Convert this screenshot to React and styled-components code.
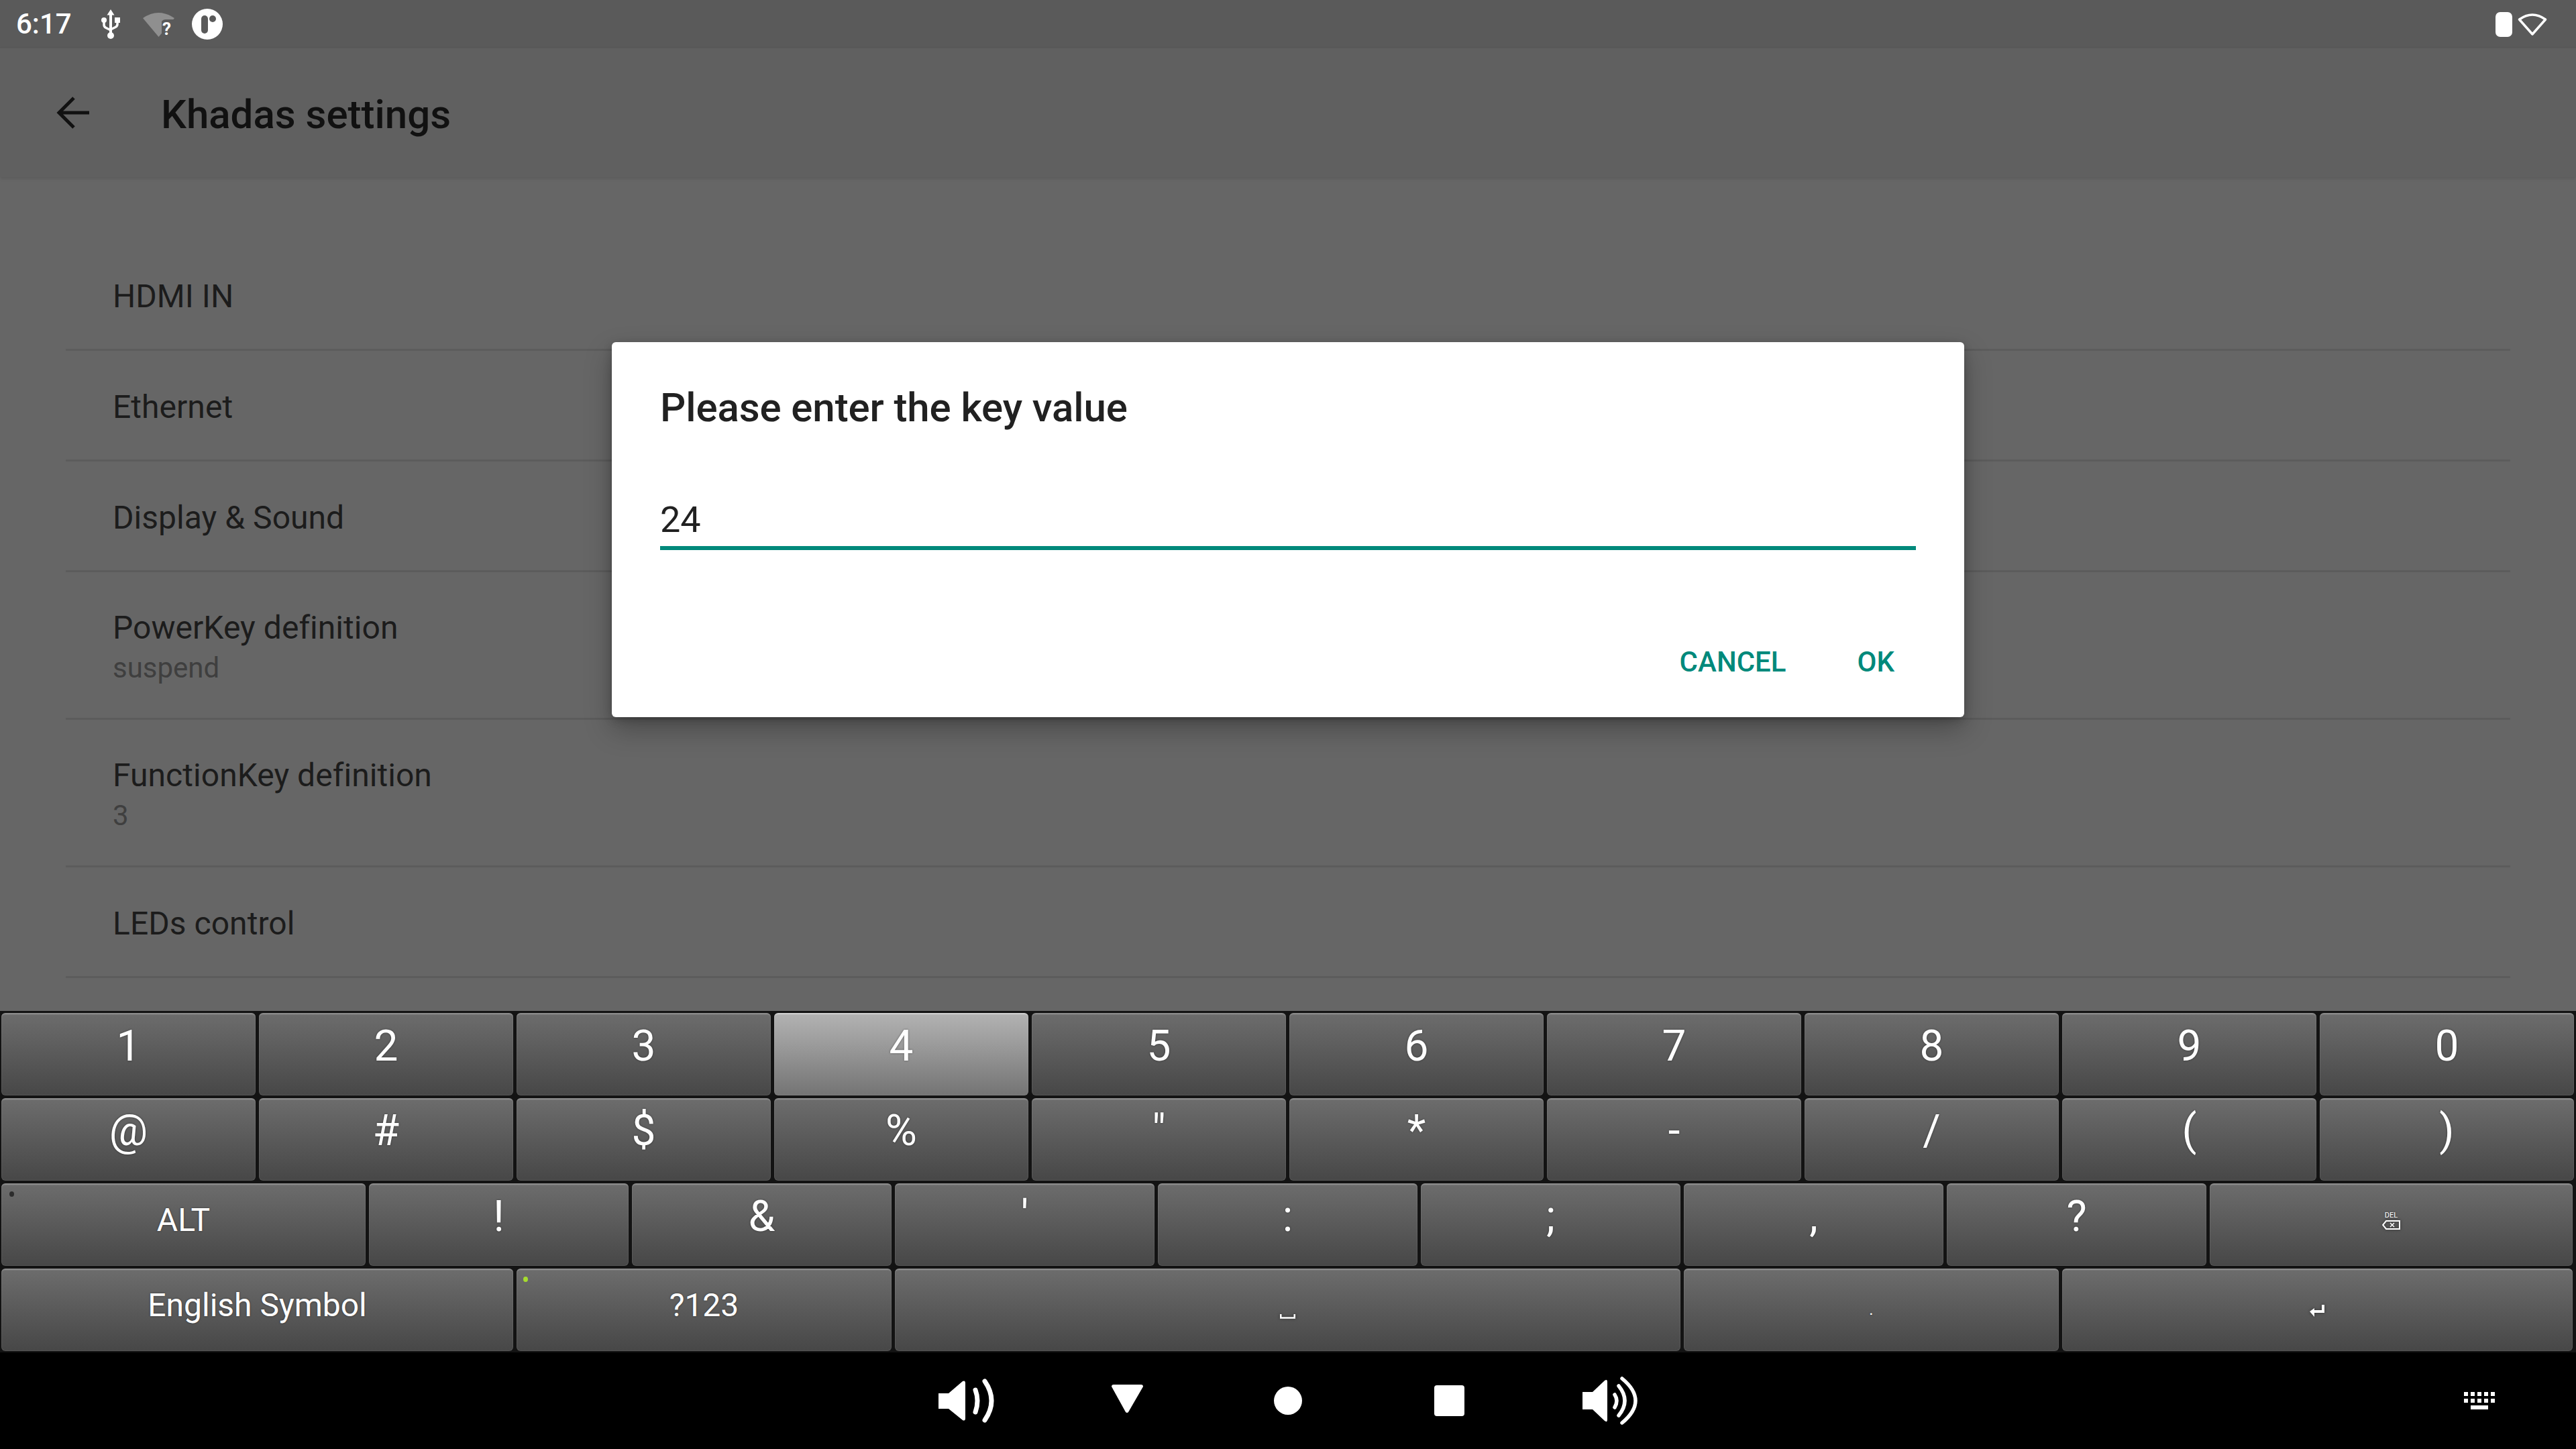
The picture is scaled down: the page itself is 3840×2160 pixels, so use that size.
import styled, { createGlobalStyle } from "styled-components";

const Global = createGlobalStyle`
  html, body {
    margin: 0;
    padding: 0;
    background: #666;
  }
  * {
    box-sizing: border-box;
  }
`;

const Page = styled.div`
  position: relative;
  display: flex;
  flex-direction: column;
  width: 100%;
  height: 100vh;
  overflow: hidden;
  background: #666;
  font-family: Roboto, "Noto Sans", sans-serif;
`;

const StatusBar = styled.div`
  display: flex;
  align-items: center;
  justify-content: space-between;
  flex: 0 0 72px;
  padding: 0 43px 0 24px;
  background: #5a5a5a;
  color: #fff;
`;

const StatusGroup = styled.div`
  display: flex;
  align-items: center;
  gap: ${(p) => p.$gap || 0}px;
`;

const Time = styled.span`
  font-size: 42px;
  font-weight: 500;
  line-height: 72px;
  margin-right: 22px;
`;

const IconSlot = styled.span`
  display: flex;
  align-items: center;
  justify-content: center;
  width: 72px;
`;

const ActionBar = styled.div`
  position: relative;
  z-index: 1;
  display: flex;
  align-items: center;
  flex: 0 0 192px;
  padding-left: 84px;
  background: #606060;
  box-shadow: 0 2px 5px rgba(0, 0, 0, 0.12);
`;

const BarTitle = styled.h1`
  margin: 4px 0 0 107px;
  font-size: 60px;
  font-weight: 500;
  color: #111;
`;

const List = styled.div`
  flex: 1;
  padding: 94px 98px 0;
`;

const Row = styled.div`
  display: flex;
  flex-direction: column;
  justify-content: center;
  height: ${(p) => (p.$tall ? 220 : 165)}px;
  padding: 5px 0 0 70px;
  border-bottom: 3px solid #5c5c5c;
`;

const RowTitle = styled.div`
  font-size: 48px;
  line-height: 64px;
  letter-spacing: 0.04px;
  color: #1c1c1c;
`;

const RowValue = styled.div`
  font-size: 42px;
  line-height: 56px;
  color: #3f3f3f;
`;

const Dialog = styled.div`
  position: absolute;
  top: 510px;
  left: 912px;
  display: flex;
  flex-direction: column;
  width: 2016px;
  height: 559px;
  padding: 62px 72px 0;
  background: #fff;
  border-radius: 6px;
  box-shadow: 0 18px 40px rgba(0, 0, 0, 0.28), 0 4px 14px rgba(0, 0, 0, 0.2);
`;

const DialogTitle = styled.div`
  font-size: 60px;
  font-weight: 500;
  line-height: 72px;
  letter-spacing: -0.1px;
  color: #212121;
`;

const Field = styled.div`
  margin-top: 96px;
  height: 80px;
  font-size: 54px;
  line-height: 70px;
  color: #212121;
  border-bottom: 6px solid #00897b;
`;

const Actions = styled.div`
  display: flex;
  justify-content: flex-end;
  gap: 106px;
  margin-top: 142px;
  padding-right: 32px;
`;

const ActionButton = styled.span`
  font-size: 42px;
  font-weight: 500;
  line-height: 50px;
  color: #00897b;
`;

const Keyboard = styled.div`
  display: flex;
  flex-direction: column;
  gap: 4px;
  flex: 0 0 509px;
  padding: 3px 0 2px 2px;
  background: #131313;
`;

const KeyRow = styled.div`
  display: flex;
  gap: 5px;
  height: 123px;
`;

const Key = styled.div`
  position: relative;
  display: flex;
  align-items: center;
  justify-content: center;
  flex: 0 0 ${(p) => p.$w - 5}px;
  padding-top: ${(p) => p.$drop || 0}px;
  padding-bottom: ${(p) => p.$lift || 0}px;
  font-size: ${(p) => p.$size || 64}px;
  font-weight: 400;
  color: #fff;
  text-shadow: 0 0 3px rgba(0, 0, 0, 0.45);
  border-radius: 6px;
  border-top: 2px solid ${(p) => (p.$active ? "#cfcfcf" : "#8c8c8c")};
  box-shadow: inset 0 0 0 1px rgba(255, 255, 255, 0.08);
  background: ${(p) =>
    p.$active
      ? "linear-gradient(#b2b2b2, #747474)"
      : "linear-gradient(#6c6c6c, #474747)"};

  svg {
    filter: drop-shadow(0 0 2px rgba(0, 0, 0, 0.5));
  }
`;

const Led = styled.i`
  position: absolute;
  top: ${(p) => p.$top}px;
  left: ${(p) => p.$left}px;
  width: 7px;
  height: 8px;
  border-radius: 50%;
  background: ${(p) => (p.$on ? "#a6dc2e" : "#2c2c2c")};
`;

const DelLabel = styled.span`
  display: flex;
  flex-direction: column;
  align-items: center;
  gap: 1px;
  font-size: 11px;
  line-height: 12px;
  font-weight: 400;
`;

const NavBar = styled.div`
  display: grid;
  grid-template-columns: 1fr auto 1fr;
  align-items: center;
  flex: 0 0 144px;
  background: #000;
`;

const NavCenter = styled.div`
  grid-column: 2;
  display: flex;
`;

const NavSlot = styled.span`
  display: flex;
  align-items: center;
  justify-content: center;
  width: 240px;
`;

const NavRight = styled.div`
  display: flex;
  justify-content: flex-end;
  padding-right: 121px;
`;

const UsbIcon = () => (
  <svg width="28" height="44" viewBox="0 0 28 44">
    <path d="M14 0l5.500 8.500H16V36h-4V8.500H8.500z" fill="#fff" />
    <circle cx="14" cy="39" r="5" fill="#fff" />
    <circle cx="4" cy="16" r="4" fill="#fff" />
    <rect x="20" y="12" width="8" height="8" fill="#fff" />
    <path d="M4 18v5q0 3 3 4.500l7 3.500M24 18v4q0 3-3 4.500L14 30" fill="none" stroke="#fff" strokeWidth="3.500" />
  </svg>
);

const WifiUnknownIcon = () => (
  <svg width="47" height="44" viewBox="0 0 47 44">
    <path d="M0 13Q23-3 47 13L23.500 41z" fill="#8f8f8f" />
    <path d="M28 18q2-3 6-3h13v26H28z" fill="#5a5a5a" />
    <text x="29" y="38" fontFamily="Roboto, sans-serif" fontWeight="700" fontSize="26" fill="#fff">?</text>
  </svg>
);

const LogoIcon = () => (
  <svg width="46" height="46" viewBox="0 0 46 46">
    <circle cx="23" cy="23" r="23" fill="#fff" />
    <rect x="14" y="10" width="10" height="27" rx="5" fill="#5a5a5a" />
    <circle cx="31" cy="15" r="5" fill="#5a5a5a" />
  </svg>
);

const BatteryIcon = () => (
  <svg width="25" height="37" viewBox="0 0 25 37">
    <rect width="25" height="37" rx="7" fill="#fff" />
  </svg>
);

const WifiIcon = () => (
  <svg width="44" height="36" viewBox="0 0 44 36">
    <path d="M2.500 11Q22-3 41.500 11L22 33z" fill="none" stroke="#fff" strokeWidth="3.500" strokeLinejoin="round" />
  </svg>
);

const BackIcon = () => (
  <svg width="49" height="48" viewBox="0 0 49 48">
    <path d="M49 24H4M26 2L4 24l22 22" fill="none" stroke="#111" strokeWidth="5" />
  </svg>
);

const DelIcon = () => (
  <svg width="27" height="14" viewBox="0 0 27 14">
    <path d="M26 1H6L1 7l5 6h20z" fill="none" stroke="#fff" strokeWidth="2" />
    <path d="M12 4l6 6M18 4l-6 6" stroke="#fff" strokeWidth="1.500" />
  </svg>
);

const EnterIcon = () => (
  <svg width="23" height="18" viewBox="0 0 23 18">
    <path d="M20 0v10H7" fill="none" stroke="#fff" strokeWidth="4" />
    <path d="M0 10l7-5v13z" fill="#fff" />
  </svg>
);

const SpaceIcon = () => (
  <svg width="23" height="7" viewBox="0 0 23 7">
    <path d="M1.250 0v5.500h20.500V0" fill="none" stroke="#fff" strokeWidth="2.500" />
  </svg>
);

const VolumeDownIcon = () => (
  <svg width="84" height="66" viewBox="0 0 84 66">
    <path d="M1 22h15L37 4q4-2 4 3v52q0 5-4 3L16 45H1z" fill="#fff" />
    <g fill="none" stroke="#fff" strokeWidth="7" strokeLinecap="round">
      <path d="M56 17q6 16 0 33" />
      <path d="M70 4q20 29 0 58" />
    </g>
  </svg>
);

const VolumeUpIcon = () => (
  <svg width="84" height="72" viewBox="0 0 84 72">
    <path d="M1 23h15L34 6q4-3 4 2v56q0 5-4 2L16 49H1z" fill="#fff" />
    <g fill="none" stroke="#fff" strokeWidth="5.500" strokeLinecap="round">
      <path d="M49 27q6 9 0 19" />
      <path d="M55 14q18 22 0 44" />
      <path d="M60 3q40 33 0 66" />
    </g>
  </svg>
);

const BackTriangle = () => (
  <svg width="47" height="48" viewBox="0 0 47 48">
    <path d="M3 0h41q3 0 3 3L25 41q-2 2-4 0L0 3q0-3 3-3z" fill="#fff" />
  </svg>
);

const HomeCircle = () => (
  <svg width="42" height="42" viewBox="0 0 42 42">
    <circle cx="21" cy="21" r="21" fill="#fff" />
  </svg>
);

const RecentSquare = () => (
  <svg width="45" height="46" viewBox="0 0 45 46">
    <rect width="45" height="46" rx="4" fill="#fff" />
  </svg>
);

const KeyboardIcon = () => (
  <svg width="46" height="26" viewBox="0 0 46 26" fill="#fff">
    {[0, 10, 20, 30, 40].map((x) => (
      <g key={x}>
        <rect x={x} y="0" width="6" height="6" />
        <rect x={x} y="10" width="6" height="6" />
      </g>
    ))}
    <rect x="10" y="20" width="26" height="6" />
  </svg>
);

const settings = [
  { title: "HDMI IN" },
  { title: "Ethernet" },
  { title: "Display & Sound" },
  { title: "PowerKey definition", value: "suspend" },
  { title: "FunctionKey definition", value: "3" },
  { title: "LEDs control" },
];

const digits = ["1", "2", "3", "4", "5", "6", "7", "8", "9", "0"];
const symbols = ["@", "#", "$", "%", '"', "*", "-", "/", "(", ")"];
const punctuation = ["!", "&", "'", ":", ";", ",", "?"];

export default function App() {
  return (
    <Page>
      <Global />
      <StatusBar>
        <StatusGroup>
          <Time>6:17</Time>
          <IconSlot><UsbIcon /></IconSlot>
          <IconSlot><WifiUnknownIcon /></IconSlot>
          <IconSlot><LogoIcon /></IconSlot>
        </StatusGroup>
        <StatusGroup $gap={8}>
          <BatteryIcon />
          <WifiIcon />
        </StatusGroup>
      </StatusBar>

      <ActionBar>
        <BackIcon />
        <BarTitle>Khadas settings</BarTitle>
      </ActionBar>

      <List>
        {settings.map((s) => (
          <Row key={s.title} $tall={!!s.value}>
            <RowTitle>{s.title}</RowTitle>
            {s.value && <RowValue>{s.value}</RowValue>}
          </Row>
        ))}
      </List>

      <Keyboard>
        <KeyRow>
          {digits.map((d) => (
            <Key key={d} $w={384} $lift={26} $active={d === "4"}>{d}</Key>
          ))}
        </KeyRow>
        <KeyRow>
          {symbols.map((s) => (
            <Key key={s} $w={384} $lift={28}>{s}</Key>
          ))}
        </KeyRow>
        <KeyRow>
          <Key $w={548} $size={48} $lift={16}>
            <Led $top={10} $left={12} />
            ALT
          </Key>
          {punctuation.map((s) => (
            <Key key={s} $w={392} $lift={26}>{s}</Key>
          ))}
          <Key $w={546} $lift={14}>
            <DelLabel>DEL<DelIcon /></DelLabel>
          </Key>
        </KeyRow>
        <KeyRow>
          <Key $w={768} $size={48} $lift={16}>English Symbol</Key>
          <Key $w={564} $size={48} $lift={16}>
            <Led $top={10} $left={10} $on />
            ?123
          </Key>
          <Key $w={1176} $drop={18}><SpaceIcon /></Key>
          <Key $w={564} $size={24} $lift={4}>.</Key>
          <Key $w={766}><EnterIcon /></Key>
        </KeyRow>
      </Keyboard>

      <NavBar>
        <NavCenter>
          <NavSlot><VolumeDownIcon /></NavSlot>
          <NavSlot><BackTriangle /></NavSlot>
          <NavSlot><HomeCircle /></NavSlot>
          <NavSlot><RecentSquare /></NavSlot>
          <NavSlot><VolumeUpIcon /></NavSlot>
        </NavCenter>
        <NavRight><KeyboardIcon /></NavRight>
      </NavBar>

      <Dialog>
        <DialogTitle>Please enter the key value</DialogTitle>
        <Field>24</Field>
        <Actions>
          <ActionButton>CANCEL</ActionButton>
          <ActionButton>OK</ActionButton>
        </Actions>
      </Dialog>
    </Page>
  );
}
